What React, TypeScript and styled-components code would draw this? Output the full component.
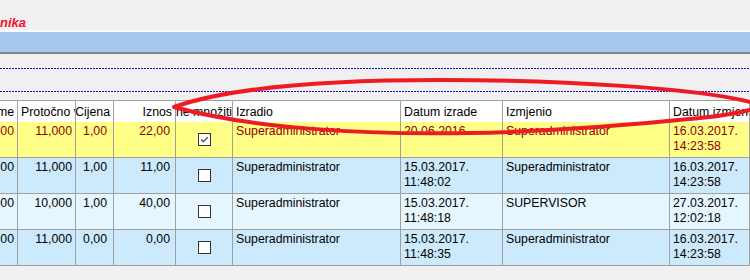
import styled, { createGlobalStyle } from 'styled-components';

const GlobalStyle = createGlobalStyle`
  html, body {
    margin: 0;
    padding: 0;
    background: #f0f0f0;
  }
  body {
    font-family: 'Liberation Sans', Arial, sans-serif;
    font-size: 12.3px;
    color: #000;
  }
`;

type Align = 'left' | 'right' | 'center';
type Tone = 'marked' | 'even' | 'odd';

interface Column {
  title: string;
  width: string;
  headAlign: Align;
  align: Align;
  pad: number;
}

const columns: Column[] = [
  { title: 'Vrijeme', width: '18px', headAlign: 'right', align: 'right', pad: 3 },
  { title: 'Protočno vrijeme', width: '58px', headAlign: 'left', align: 'right', pad: 3 },
  { title: 'Cijena', width: '38px', headAlign: 'right', align: 'right', pad: 6 },
  { title: 'Iznos', width: '62px', headAlign: 'right', align: 'right', pad: 5 },
  { title: 'ne množiti', width: '57px', headAlign: 'center', align: 'center', pad: 0 },
  { title: 'Izradio', width: '168px', headAlign: 'left', align: 'left', pad: 3 },
  { title: 'Datum izrade', width: '102px', headAlign: 'left', align: 'left', pad: 3 },
  { title: 'Izmjenio', width: '167px', headAlign: 'left', align: 'left', pad: 3 },
  { title: 'Datum izmjene', width: '1fr', headAlign: 'left', align: 'left', pad: 3 },
];

const gridCols = columns.map((c) => c.width).join(' ');

interface Entry {
  tone: Tone;
  qty: string;
  flow: string;
  price: string;
  amount: string;
  noMultiply: boolean;
  createdBy: string;
  created: string;
  changedBy: string;
  changed: string;
}

const entries: Entry[] = [
  {
    tone: 'marked',
    qty: '2,00',
    flow: '11,000',
    price: '1,00',
    amount: '22,00',
    noMultiply: true,
    createdBy: 'Superadministrator',
    created: '20.06.2016.',
    changedBy: 'Superadministrator',
    changed: '16.03.2017.\n14:23:58',
  },
  {
    tone: 'even',
    qty: '1,00',
    flow: '11,000',
    price: '1,00',
    amount: '11,00',
    noMultiply: false,
    createdBy: 'Superadministrator',
    created: '15.03.2017.\n11:48:02',
    changedBy: 'Superadministrator',
    changed: '16.03.2017.\n14:23:58',
  },
  {
    tone: 'odd',
    qty: '4,00',
    flow: '10,000',
    price: '1,00',
    amount: '40,00',
    noMultiply: false,
    createdBy: 'Superadministrator',
    created: '15.03.2017.\n11:48:18',
    changedBy: 'SUPERVISOR',
    changed: '27.03.2017.\n12:02:18',
  },
  {
    tone: 'even',
    qty: '1,00',
    flow: '11,000',
    price: '0,00',
    amount: '0,00',
    noMultiply: false,
    createdBy: 'Superadministrator',
    created: '15.03.2017.\n11:48:35',
    changedBy: 'Superadministrator',
    changed: '16.03.2017.\n14:23:58',
  },
];

const alignMap: Record<Align, string> = {
  left: 'flex-start',
  right: 'flex-end',
  center: 'center',
};

const toneBg: Record<Tone, string> = {
  marked: '#ffff88',
  even: '#cdeafc',
  odd: '#e6f6fe',
};

const Page = styled.div`
  position: relative;
  width: 750px;
  height: 280px;
  overflow: hidden;
  background: #f0f0f0;
`;

const TitleBar = styled.div`
  height: 30px;
  display: flex;
  align-items: flex-end;
`;

const TitleClip = styled.div`
  width: 26px;
  display: flex;
  justify-content: flex-end;
  overflow: hidden;
`;

const Title = styled.span`
  flex-shrink: 0;
  white-space: nowrap;
  font-size: 13px;
  line-height: 15px;
  font-weight: bold;
  font-style: italic;
  color: #f5102a;
`;

const Band = styled.div`
  height: 20px;
  background: #a6c8ee;
  border-top: 2px solid #fbfbfb;
  border-bottom: 2px solid #858585;
`;

const FilterArea = styled.div`
  display: flex;
  flex-direction: column;
  gap: 22px;
  padding-top: 14px;
`;

const DottedRule = styled.div`
  height: 1px;
  background: repeating-linear-gradient(to right, #2208d0 0 2px, transparent 2px 3px);
`;

const Table = styled.div`
  margin-top: 8px;
`;

const HeadRow = styled.div`
  display: grid;
  grid-template-columns: ${gridCols};
  height: 22px;
  box-sizing: border-box;
  border-top: 1px solid #a0a0a0;
  background: #fff;
`;

const Row = styled.div<{ $tone: Tone }>`
  display: grid;
  grid-template-columns: ${gridCols};
  height: 36px;
  box-sizing: border-box;
  border-bottom: 1px solid #a0a0a0;
  background: ${(p) => toneBg[p.$tone]};
  color: ${(p) => (p.$tone === 'marked' ? '#900000' : '#000')};
`;

const Cell = styled.div<{ $align: Align; $pad: number }>`
  display: flex;
  flex-direction: column;
  align-items: ${(p) => alignMap[p.$align]};
  padding: 2px ${(p) => p.$pad}px 0;
  border-right: 1px solid #a0a0a0;
  overflow: hidden;
  white-space: nowrap;
  line-height: 15px;
  min-width: 0;
`;

const HeadCell = styled(Cell)`
  padding-top: 4px;
  line-height: 14px;
`;

const CheckCell = styled(Cell)`
  justify-content: center;
  padding: 0;
`;

const Line = styled.span`
  flex-shrink: 0;
`;

const Box = styled.span<{ $checked: boolean }>`
  width: 13px;
  height: 13px;
  box-sizing: border-box;
  border: 1px solid #333;
  background: ${(p) => (p.$checked ? '#fbfbfb' : '#fff')};
  display: flex;
  align-items: center;
  justify-content: center;
`;

const Annotation = styled.svg`
  position: absolute;
  left: 0;
  top: 0;
  pointer-events: none;
`;

const CheckBox = ({ checked }: { checked: boolean }) => (
  <Box $checked={checked}>
    {checked && (
      <svg width="11" height="11" viewBox="0 0 11 11">
        <path d="M2.2 5.6 L4.3 7.8 L8.8 3.2" fill="none" stroke="#555" strokeWidth="1.4" />
      </svg>
    )}
  </Box>
);

const TextCell = ({ col, value }: { col: Column; value: string }) => (
  <Cell $align={col.align} $pad={col.pad}>
    {value.split('\n').map((line, i) => (
      <Line key={i}>{line}</Line>
    ))}
  </Cell>
);

const App = () => {
  return (
    <>
      <GlobalStyle />
      <Page>
        <TitleBar>
          <TitleClip>
            <Title>Pregled cjenika</Title>
          </TitleClip>
        </TitleBar>
        <Band />
        <FilterArea>
          <DottedRule />
          <DottedRule />
        </FilterArea>
        <Table>
          <HeadRow>
            {columns.map((col, i) => (
              <HeadCell key={i} $align={col.headAlign} $pad={col.pad === 0 ? 0 : 3}>
                <Line>{col.title}</Line>
              </HeadCell>
            ))}
          </HeadRow>
          {entries.map((e, i) => (
            <Row key={i} $tone={e.tone}>
              <TextCell col={columns[0]} value={e.qty} />
              <TextCell col={columns[1]} value={e.flow} />
              <TextCell col={columns[2]} value={e.price} />
              <TextCell col={columns[3]} value={e.amount} />
              <CheckCell $align="center" $pad={0}>
                <CheckBox checked={e.noMultiply} />
              </CheckCell>
              <TextCell col={columns[5]} value={e.createdBy} />
              <TextCell col={columns[6]} value={e.created} />
              <TextCell col={columns[7]} value={e.changedBy} />
              <TextCell col={columns[8]} value={e.changed} />
            </Row>
          ))}
        </Table>
        <Annotation width="750" height="280" viewBox="0 0 750 280">
          <path
            d="M174 107 C228 88 320 80 440 80 C560 80 700 88 754 103 C768 107 740 114 700 118 C660 122 580 131 470 133 C360 135 250 128 174 107 Z"
            fill="none"
            stroke="#ed1c24"
            strokeWidth="4"
            strokeLinejoin="round"
          />
        </Annotation>
      </Page>
    </>
  );
};

export default App;
